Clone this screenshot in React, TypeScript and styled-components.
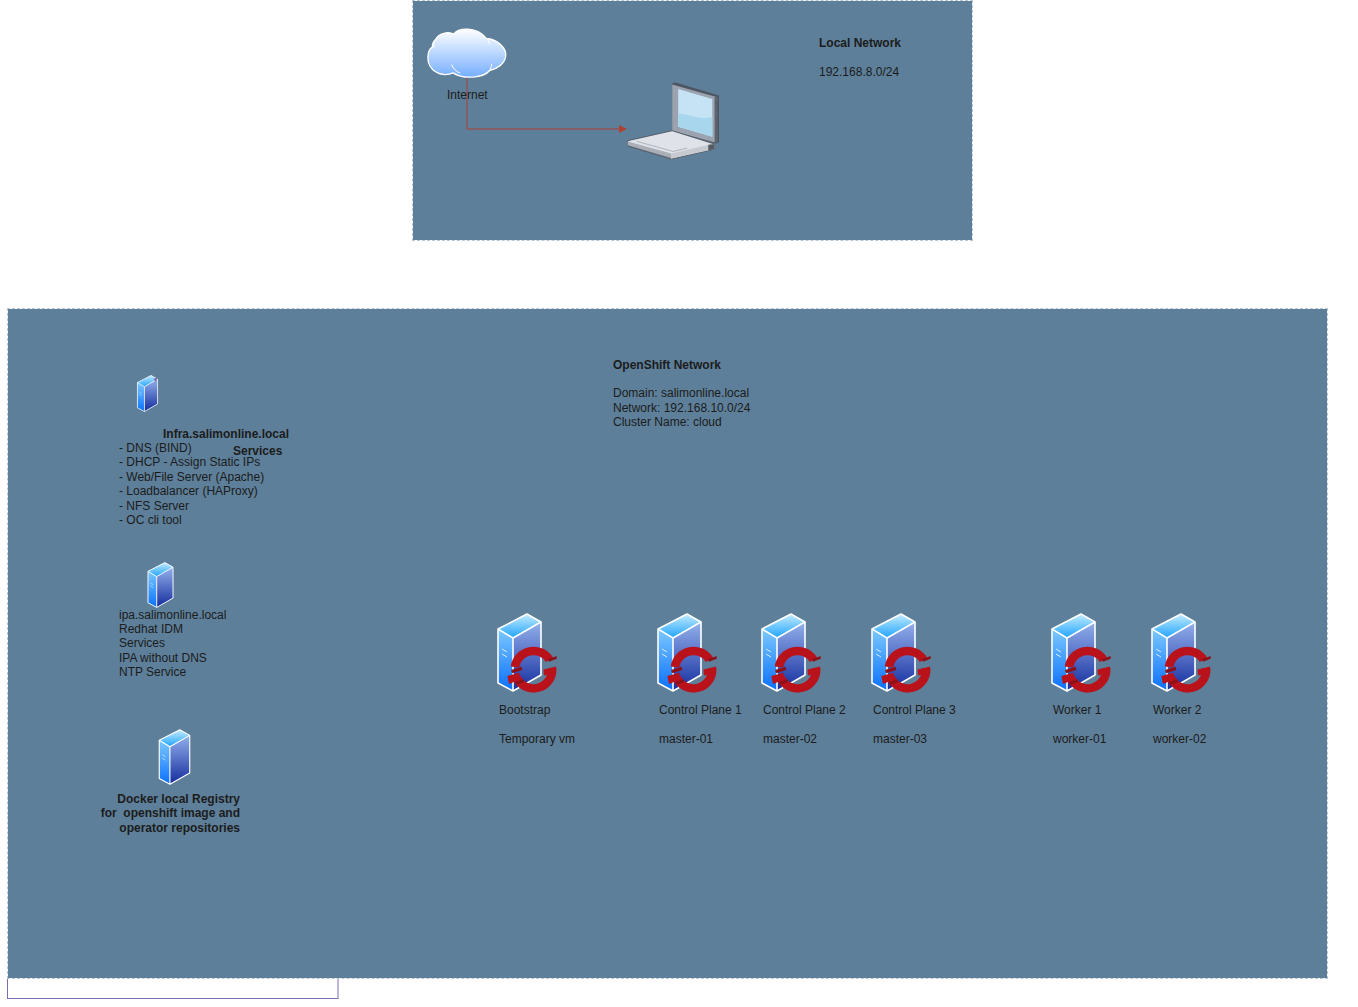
import { createGlobalStyle, styled } from "styled-components";

const GlobalStyle = createGlobalStyle`
  html, body {
    margin: 0;
    padding: 0;
    background: #ffffff;
  }
  body {
    font-family: "Liberation Sans", Arial, sans-serif;
    font-size: 12px;
    line-height: 14.4px;
    color: #1c1c1c;
  }
`;

const Page = styled.div`
  width: 1358px;
  height: 1007px;
  overflow: hidden;
  display: flex;
  flex-direction: column;
  align-items: flex-start;
`;

const Panel = styled.section`
  position: relative;
  box-sizing: border-box;
  background: #5d7f99;
  background-clip: padding-box;
  border: 1px dashed #bac8d3;
`;

const LocalPanel = styled(Panel)`
  width: 561px;
  height: 241px;
  margin-left: 412px;
`;

const OpenshiftPanel = styled(Panel)`
  width: 1321px;
  height: 671px;
  margin-top: 67px;
  margin-left: 7px;
  padding-left: 111px;
  display: flex;
`;

const EmptyBox = styled.div`
  box-sizing: border-box;
  width: 332px;
  height: 20px;
  margin-left: 7px;
  border: 1px solid #7d6bb0;
  border-top: none;
  border-right: 2px solid #bdb5da;
`;

// the top panel is a small free canvas: cloud, link and laptop
const CanvasItem = styled.div<{ $x: number; $y: number }>`
  position: absolute;
  left: ${(p) => p.$x}px;
  top: ${(p) => p.$y}px;
`;

const Text = styled.div<{ $bold?: boolean }>`
  white-space: pre;
  font-weight: ${(p) => (p.$bold ? 700 : 400)};
`;

const CanvasLabel = styled(CanvasItem)<{ $bold?: boolean }>`
  white-space: pre;
  font-weight: ${(p) => (p.$bold ? 700 : 400)};
`;

const ServicesColumn = styled.div`
  width: 378px;
  flex: none;
  padding-top: 66px;
  display: flex;
  flex-direction: column;
`;

const InfraBlock = styled.div`
  position: relative;
  margin-top: 14.6px;
`;

const InfraTitle = styled(Text)`
  padding-left: 44px;
`;

// sits over the list in the reference too
const InfraServices = styled(Text)`
  position: absolute;
  left: 114px;
  top: 17px;
`;

const InfraIcon = styled.div`
  margin-left: 17px;
`;

const IpaIcon = styled.div`
  margin: 34.2px 0 0 28px;
`;

const RegistryIcon = styled.div`
  margin: 49.4px 0 7px 39px;
`;

const RegistryText = styled(Text)`
  width: 142px;
  margin-left: -21px;
  text-align: right;
`;

const ClusterColumn = styled.div`
  flex: 1;
  padding-top: 49px;
  display: flex;
  flex-direction: column;
`;

const NetworkInfo = styled.div`
  margin-left: 116px;
  height: 71.6px;
`;

const NetworkDetails = styled(Text)`
  margin-top: 13.9px;
`;

const NodeRow = styled.div`
  display: flex;
  margin-top: 183.4px;
`;

const NodeCard = styled.div<{ $width: number }>`
  width: ${(p) => p.$width}px;
  flex: none;
`;

const NodeLabel = styled(Text)`
  margin-top: 8px;
  padding-left: 2px;
`;

const Graphic = styled.svg`
  display: block;
  overflow: visible;
`;

const Defs = styled.svg`
  position: absolute;
  width: 0;
  height: 0;
`;

const SharedDefs = () => (
  <Defs aria-hidden="true">
    <defs>
      <linearGradient id="srvTop" x1="0" y1="0" x2="0" y2="1">
        <stop offset="0" stopColor="#c4ecff" />
        <stop offset="1" stopColor="#1fa4ff" />
      </linearGradient>
      <linearGradient id="srvFront" x1="0" y1="0" x2="0" y2="1">
        <stop offset="0" stopColor="#7cc8ff" />
        <stop offset="1" stopColor="#0a70ff" />
      </linearGradient>
      <linearGradient id="srvSide" x1="0" y1="0" x2="0" y2="1">
        <stop offset="0" stopColor="#93b0ec" />
        <stop offset="1" stopColor="#142c9e" />
      </linearGradient>
      <linearGradient id="cloudFill" x1="0" y1="0" x2="0" y2="1">
        <stop offset="0" stopColor="#ffffff" />
        <stop offset="1" stopColor="#75aeff" />
      </linearGradient>
    </defs>
  </Defs>
);

const ServerBody = () => (
  <>
    <polygon points="1,16 30,1 44,9 16,25" fill="url(#srvTop)" />
    <polygon points="1,16 16,25 16,78 1,70" fill="url(#srvFront)" />
    <polygon points="16,25 44,9 44,62 16,78" fill="url(#srvSide)" />
    <path
      d="M1 16 L30 1 L44 9 L44 62 L16 78 L1 70 Z M1 16 L16 25 L44 9 M16 25 L16 78"
      fill="none"
      stroke="#ffffff"
      strokeWidth="1.6"
      strokeLinejoin="round"
    />
    <path d="M5 36 L10 39 M5 41 L10 44" stroke="#d5ecff" strokeWidth="1" />
  </>
);

const Server = ({ w, h, marked }: { w: number; h: number; marked?: boolean }) => (
  <Graphic width={w} height={h} viewBox="0 0 45 79">
    <ServerBody />
    {marked && (
      <>
        <path d="M8 13 L34 6" stroke="#8fd0ff" strokeWidth="1.4" />
        <polygon points="35,8 44,6 40,15" fill="#7c6bb0" />
      </>
    )}
  </Graphic>
);

// server tile with the OpenShift ring on top, ring centre is 36.5,56.7
const OpenshiftServer = () => (
  <Graphic width={62} height={82} viewBox="0 0 62 82">
    <ServerBody />
    <path
      d="M17.9 54 A18.8 18.8 0 0 1 52.4 46.7"
      fill="none"
      stroke="#b9121b"
      strokeWidth="8.5"
    />
    <path
      d="M55.2 55.2 A18.8 18.8 0 0 1 19.5 64.7"
      fill="none"
      stroke="#b9121b"
      strokeWidth="8.5"
    />
    <polygon points="50.7,46.3 59.7,43 59.7,45.7 52,48.7" fill="#8e1119" />
    <polygon points="46.5,56.5 59,53.5 59,59.5 47,62.5" fill="#b9121b" />
    <polygon points="14,57 24.7,53.7 25.3,57 15.3,60.3" fill="#8e1119" />
    <polygon points="10.3,63 22.3,59.7 23.7,66.3 12,71" fill="#b9121b" />
    <polygon points="18,69.3 26.3,66.3 27.3,68.7 19.7,72" fill="#8e1119" />
  </Graphic>
);

const Cloud = () => (
  <Graphic width={80} height={51} viewBox="50 83 240 152">
    <path
      d="M75 118 C85 98 115 92 130 101 C145 80 200 78 228 114 C258 116 290 140 286 168 C283 190 260 205 238 210 C220 232 160 238 128 217 C105 228 65 222 54 185 C50 165 55 145 66 140 C66 130 70 122 75 118 Z"
      fill="url(#cloudFill)"
      stroke="#ffffff"
      strokeWidth="4"
      strokeLinejoin="round"
    />
    <path
      d="M124 192 C128 205 138 213 150 218 M244 190 C243 200 240 207 236 212 M228 114 C233 118 236 124 237 132 M74 118 C70 128 70 134 72 142"
      fill="none"
      stroke="#ffffff"
      strokeWidth="3"
    />
  </Graphic>
);

const Laptop = () => (
  <Graphic width={92} height={78} viewBox="650 245 275 232">
    <polygon points="785,248 795,246 925,285 925,425 915,428 785,390" fill="#4d5560" />
    <polygon points="785,252 920,290 913,425 785,390" fill="#9aa3af" />
    <polygon points="912,290 920,287 922,425 912,430" fill="#5c636d" />
    <polygon points="803,265 905,295 905,408 803,378" fill="#c6e3f5" />
    <path d="M803 340 C830 335 850 358 905 350 L905 408 L803 378 Z" fill="#a8d6ec" />
    <polygon
      points="652,420 785,390 912,430 912,445 782,475 652,435"
      fill="#dfe2e8"
      stroke="#4a505a"
      strokeWidth="2.5"
      strokeLinejoin="round"
    />
    <polygon points="652,422 782,458 782,473 652,435" fill="#a9aeb7" />
    <polygon points="782,458 895,432 912,430 912,445 782,473" fill="#c7cad0" />
    <polygon points="893,432 912,430 912,445 893,449" fill="#555b65" />
    <path d="M680 422 L788 452 L830 442" fill="none" stroke="#7d838d" strokeWidth="1.5" />
    <path d="M652 435 L782 473" fill="none" stroke="#4a505a" strokeWidth="2" />
  </Graphic>
);

const InternetLink = () => (
  <Graphic width={162} height={56} viewBox="0 0 162 56">
    <path d="M1 0 V52 H155" fill="none" stroke="#ae4132" strokeWidth="1" />
    <polygon points="153,48 161,52 153,56" fill="#ae4132" />
  </Graphic>
);

const nodes = [
  { width: 160, name: "Bootstrap", host: "Temporary vm" },
  { width: 104, name: "Control Plane 1", host: "master-01" },
  { width: 110, name: "Control Plane 2", host: "master-02" },
  { width: 180, name: "Control Plane 3", host: "master-03" },
  { width: 100, name: "Worker 1", host: "worker-01" },
  { width: 100, name: "Worker 2", host: "worker-02" },
];

const infraServices = `- DNS (BIND)
- DHCP - Assign Static IPs
- Web/File Server (Apache)
- Loadbalancer (HAProxy)
- NFS Server
- OC cli tool`;

const ipaText = `ipa.salimonline.local
Redhat IDM
Services
IPA without DNS
NTP Service`;

const registryText = `Docker local Registry
for  openshift image and
operator repositories`;

export default function App() {
  return (
    <Page>
      <GlobalStyle />
      <SharedDefs />
      <LocalPanel>
        <CanvasItem $x={53} $y={76}>
          <InternetLink />
        </CanvasItem>
        <CanvasItem $x={14} $y={27}>
          <Cloud />
        </CanvasItem>
        <CanvasLabel $x={34} $y={87}>Internet</CanvasLabel>
        <CanvasItem $x={214} $y={81}>
          <Laptop />
        </CanvasItem>
        <CanvasLabel $x={406} $y={35} $bold>Local Network</CanvasLabel>
        <CanvasLabel $x={406} $y={64}>192.168.8.0/24</CanvasLabel>
      </LocalPanel>

      <OpenshiftPanel>
        <ServicesColumn>
          <InfraIcon>
            <Server w={23} h={37} marked />
          </InfraIcon>
          <InfraBlock>
            <InfraTitle $bold>Infra.salimonline.local</InfraTitle>
            <InfraServices $bold>Services</InfraServices>
            <Text>{infraServices}</Text>
          </InfraBlock>
          <IpaIcon>
            <Server w={27} h={46} />
          </IpaIcon>
          <Text>{ipaText}</Text>
          <RegistryIcon>
            <Server w={33} h={56} />
          </RegistryIcon>
          <RegistryText $bold>{registryText}</RegistryText>
        </ServicesColumn>

        <ClusterColumn>
          <NetworkInfo>
            <Text $bold>OpenShift Network</Text>
            <NetworkDetails>
              {"Domain: salimonline.local\nNetwork: 192.168.10.0/24\nCluster Name: cloud"}
            </NetworkDetails>
          </NetworkInfo>
          <NodeRow>
            {nodes.map((n) => (
              <NodeCard key={n.host} $width={n.width}>
                <OpenshiftServer />
                <NodeLabel>{`${n.name}\n\n${n.host}`}</NodeLabel>
              </NodeCard>
            ))}
          </NodeRow>
        </ClusterColumn>
      </OpenshiftPanel>
      <EmptyBox />
    </Page>
  );
}
